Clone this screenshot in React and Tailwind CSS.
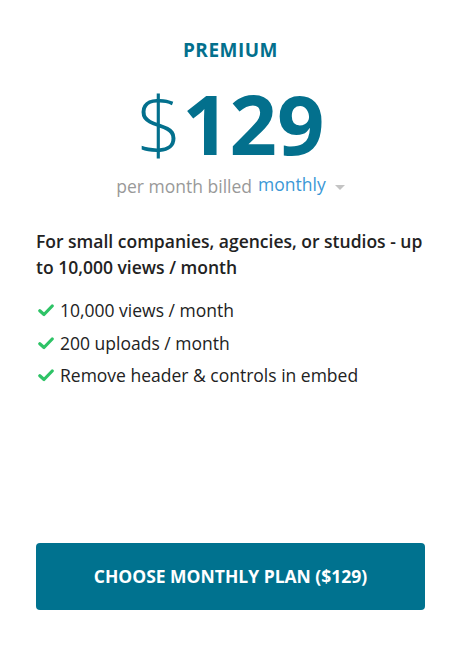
const features = [
  "10,000 views / month",
  "200 uploads / month",
  "Remove header & controls in embed",
];

function Check() {
  return (
    <svg width="16" height="14" viewBox="0 0 16 14" className="ml-[2px] shrink-0">
      <path
        d="M1.8 7.8 L6 11.5 L14.2 3"
        fill="none"
        stroke="#2ec366"
        strokeWidth="3.2"
        strokeLinecap="round"
        strokeLinejoin="round"
      />
    </svg>
  );
}

export default function App() {
  return (
    <main
      className="flex h-[648px] w-[461px] flex-col bg-white px-[36px] pb-[38px] pt-[38px]"
      style={{ fontFamily: '"Open Sans", sans-serif' }}
    >
      <h2 className="text-center text-[19px] font-bold leading-[24px] tracking-[0.5px] text-[#03708d]">
        PREMIUM
      </h2>

      <div className="mt-[25px] flex items-center justify-center text-[#03708d]">
        <span className="text-[80px] font-light leading-[72px]">$</span>
        <span className="text-[83px] font-bold leading-[72px]">129</span>
      </div>

      <p className="mt-[15px] flex items-center justify-center text-[17.5px] leading-[24px] text-[#999]">
        <span>per month billed</span>
        <span className="ml-[6px] -translate-y-[2px] text-[#3b98d6]">monthly</span>
        <span className="ml-[9px] mt-[3px] h-0 w-0 border-x-[5px] border-t-[5px] border-x-transparent border-t-[#c4c4c4]"></span>
      </p>

      <p className="mt-[30px] text-[17.5px] font-semibold leading-[26px] text-[#222]">
        For small companies, agencies, or studios - up to 10,000 views / month
      </p>

      <ul className="mt-[18px] flex flex-col gap-[8.5px]">
        {features.map((f) => (
          <li key={f} className="flex items-center gap-[6px] text-[17.5px] leading-[24px] text-[#222]">
            <Check />
            <span>{f}</span>
          </li>
        ))}
      </ul>

      <button className="mt-auto h-[67px] w-full rounded-[4px] bg-[#00728f] text-[17.5px] font-bold text-white">
        CHOOSE MONTHLY PLAN ($129)
      </button>
    </main>
  );
}
